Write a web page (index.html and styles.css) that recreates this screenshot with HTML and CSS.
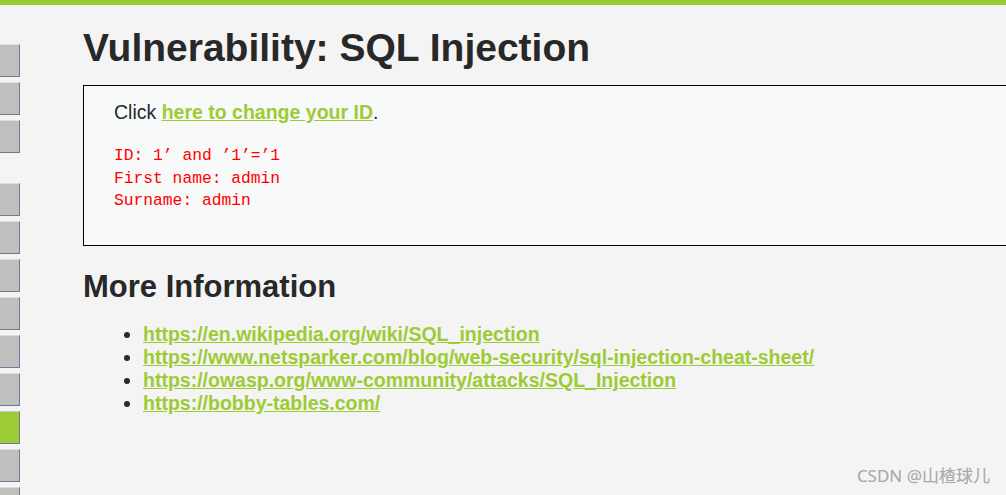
FILE: index.html
```html
<!DOCTYPE html>
<html>
<head>
<meta charset="utf-8">
<link rel="stylesheet" href="styles.css">
</head>
<body>
<div class="topbar"></div>
<div class="page">
  <nav class="sidebar">
    <ul class="menu">
      <li class="btn"></li>
      <li class="btn"></li>
      <li class="btn"></li>
    </ul>
    <ul class="menu">
      <li class="btn"></li>
      <li class="btn"></li>
      <li class="btn"></li>
      <li class="btn"></li>
      <li class="btn"></li>
      <li class="btn"></li>
      <li class="btn active"></li>
      <li class="btn"></li>
      <li class="btn"></li>
    </ul>
  </nav>
  <main class="content">
    <h1 class="title">Vulnerability: SQL Injection</h1>
    <div class="vulnerable">
      <p class="click">Click <a href="#">here to change your ID</a>.</p>
      <pre class="result">ID: 1’ and ’1’=’1
First name: admin
Surname: admin</pre>
    </div>
    <h2 class="subtitle">More Information</h2>
    <ul class="links">
      <li><a href="#">https://en.wikipedia.org/wiki/SQL_injection</a></li>
      <li><a href="#">https://www.netsparker.com/blog/web-security/sql-injection-cheat-sheet/</a></li>
      <li><a href="#">https://owasp.org/www-community/attacks/SQL_Injection</a></li>
      <li><a href="#">https://bobby-tables.com/</a></li>
    </ul>
  </main>
</div>
<div class="watermark">CSDN @山楂球儿</div>
</body>
</html>
```
FILE: styles.css
```css
html, body {
  margin: 0;
  padding: 0;
}
body {
  background: #f4f4f4;
  font-family: "Liberation Sans", Arial, sans-serif;
  color: #2a2a2a;
  width: 1006px;
  height: 495px;
  overflow: hidden;
  position: relative;
}
.topbar {
  height: 5px;
  background: #9ccb34;
}
.page {
  display: flex;
  height: 490px;
  overflow: hidden;
}
.sidebar {
  width: 20px;
  flex: none;
  padding-top: 39px;
}
.menu {
  list-style: none;
  margin: 0 0 30px 0;
  padding: 0;
  display: flex;
  flex-direction: column;
  gap: 5px;
}
.btn {
  width: 19px;
  height: 31px;
  flex: none;
  background: #bfbfbf;
  border-top: 1px solid #dedede;
  border-right: 1px solid #6d7c95;
  border-bottom: 1px solid #6d7c95;
}
.btn.active {
  background: #9ccb34;
  border-top-color: #c9c9c9;
}
.content {
  margin-left: 63px;
  flex: 1;
  min-width: 0;
  overflow: hidden;
}
.title {
  margin: 0;
  padding-top: 21px;
  font-size: 39px;
  line-height: 43px;
  font-weight: bold;
  color: #282828;
}
.vulnerable {
  margin-top: 16px;
  border: 1px solid #000;
  background: #f8f9f9;
  width: 1000px;
  height: 161px;
  padding: 0 0 0 30px;
  box-sizing: border-box;
}
.click {
  margin: 14px 0 0 0;
  font-size: 19.5px;
  line-height: 24px;
  color: #222a33;
}
.click a, .links a {
  color: #9ccb34;
  font-weight: bold;
  text-decoration: underline;
}
.result {
  margin: 21px 0 0 0;
  font-family: "Liberation Mono", "Courier New", monospace;
  font-size: 16.3px;
  line-height: 22.5px;
  color: #ff0000;
}
.subtitle {
  margin: 23px 0 0 0;
  font-size: 31px;
  line-height: 36px;
  font-weight: bold;
  color: #282828;
}
.links {
  margin: 18px 0 0 0;
  padding-left: 60px;
  font-size: 19.5px;
  line-height: 23px;
}
.links li::marker {
  color: #2a2a2a;
}
.watermark {
  position: absolute;
  right: 16px;
  bottom: 8px;
  font-family: "Noto Sans", "Noto Sans CJK SC", sans-serif;
  font-size: 17px;
  color: #a8a8a8;
  text-shadow: 0 0 1px #e8e8e8;
}
```
